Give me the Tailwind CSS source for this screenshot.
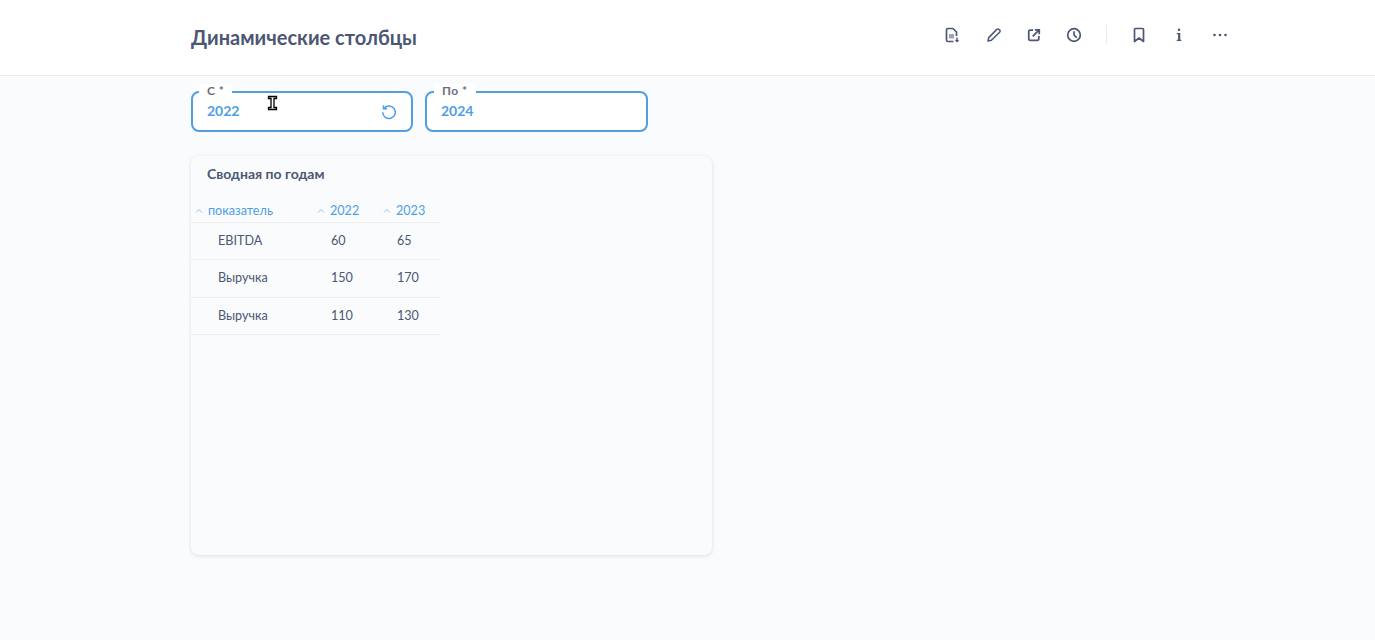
<!DOCTYPE html>
<html lang="ru">
  <head>
    <meta charset="UTF-8" />
    <title>Динамические столбцы</title>
    <script src="https://cdn.jsdelivr.net/npm/@tailwindcss/browser@4"></script>
  </head>
  <body class="relative h-[640px] overflow-hidden bg-[#f9fbfc] font-['Lato','Noto_Sans',sans-serif] text-[#4c5773]">
    <!-- Header -->
    <header class="flex h-[76px] items-center justify-between border-b border-[#eeecec] bg-white pl-[191px] pr-[147px]">
      <h1 class="pb-[2px] text-[20px] font-bold leading-none">Динамические столбцы</h1>
      <div class="flex items-center pb-[5px]">
        <svg class="size-4" viewBox="0 0 16 16" fill="none" stroke="currentColor" stroke-width="1.700">
          <path d="M9.500 14.500H4A1.500 1.500 0 0 1 2.500 13V3A1.500 1.500 0 0 1 4 1.500h5L12.500 5v4" stroke-linejoin="round" />
          <rect x="5" y="7" width="5" height="4.500" fill="currentColor" stroke="none" opacity=".55" />
          <path d="M13 10.500v4M11.500 13l1.500 1.500 1.500-1.500" stroke-width="1.300" />
        </svg>
        <svg class="ml-[26px] size-4" viewBox="0 0 16 16" fill="none" stroke="currentColor" stroke-width="1.500" stroke-linejoin="round">
          <path d="M2 14l.7-3.400L10.800 2.400a1.600 1.600 0 0 1 2.300 0l.5.5a1.600 1.600 0 0 1 0 2.300L5.400 13.300 2 14z" />
        </svg>
        <svg class="ml-[25px] size-[14px]" viewBox="0 0 16 16" fill="none" stroke="currentColor" stroke-width="2">
          <path d="M7 2.500H3.500A1.500 1.500 0 0 0 2 4v8.500A1.500 1.500 0 0 0 3.500 14H12a1.500 1.500 0 0 0 1.500-1.500V9" />
          <path d="M6.500 9.500L13 3M9 2h5v5" />
        </svg>
        <svg class="ml-[25px] size-4" viewBox="0 0 16 16" fill="none" stroke="currentColor" stroke-width="1.700">
          <circle cx="8" cy="8" r="6.300" />
          <path d="M8 4.200V8l2.800 2.600" />
        </svg>
        <div class="ml-[24px] h-5 w-px bg-[#eeecec]"></div>
        <svg class="ml-[24px] size-4" viewBox="0 0 16 16" fill="none" stroke="currentColor" stroke-width="1.700" stroke-linejoin="round">
          <path d="M3.500 2.500a1 1 0 0 1 1-1h7a1 1 0 0 1 1 1v12L8 11l-4.500 3.500z" />
        </svg>
        <svg class="ml-[24px] size-4" viewBox="0 0 16 16" fill="currentColor">
          <rect x="6.800" y="1.500" width="2.400" height="2.400" rx="1" />
          <path d="M5.800 6h3.500v6.700h1V14H5.700v-1.300h1.400V7.300H5.800z" />
        </svg>
        <svg class="ml-[25px] size-4" viewBox="0 0 16 16" fill="currentColor">
          <circle cx="2.500" cy="8" r="1.300" />
          <circle cx="8" cy="8" r="1.300" />
          <circle cx="13.500" cy="8" r="1.300" />
        </svg>
      </div>
    </header>

    <main class="pl-[191px]">
      <!-- Parameters -->
      <div class="flex gap-3 pt-[15px]">
        <div class="relative flex h-[41px] w-[222px] items-center justify-between rounded-lg border-2 border-[#509ee3] bg-white pb-[2px] pl-[14px] pr-[14px]">
          <span class="absolute -top-[9px] left-[6px] bg-white px-2 text-[12px] font-bold leading-[14px] tracking-[0.5px] text-[#696e7b]">С *</span>
          <span class="text-sm font-bold text-[#509ee3]">2022</span>
          <svg class="mt-[2px] size-4" viewBox="0 0 16 16" fill="none" stroke="#509ee3" stroke-width="1.500">
            <path d="M3.200 4.200A6.300 6.300 0 1 1 1.700 8.300" />
            <path d="M2.500 1.200v3.500H6" />
          </svg>
        </div>
        <div class="relative flex h-[41px] w-[223px] items-center rounded-lg border-2 border-[#509ee3] bg-white pb-[2px] pl-[14px]">
          <span class="absolute -top-[9px] left-[7px] bg-white px-2 text-[12px] font-bold leading-[14px] tracking-[0.5px] text-[#696e7b]">По *</span>
          <span class="text-sm font-bold text-[#509ee3]">2024</span>
        </div>
      </div>

      <!-- Card -->
      <section class="mt-6 h-[399px] w-[521px] rounded-lg bg-[#f9fbfc] shadow-[0_1px_4px_rgba(0,0,0,0.12)]">
        <h2 class="pl-4 pt-[10px] text-sm font-bold leading-4">Сводная по годам</h2>
        <table class="mt-[17px] w-[249px] table-fixed border-collapse text-[12.6px]">
          <thead>
            <tr class="h-[23px] border-b border-[#f0f0f0] text-[#509ee3]">
              <th class="w-[121px] p-0 pt-[2px] text-left font-normal">
                <div class="flex items-center pl-[4px]">
                  <svg class="mr-[5px] h-[8px] w-[8px]" viewBox="0 0 8 8" fill="none" stroke="#509ee3" stroke-opacity=".6"><path d="M1 5.500l3-3 3 3" /></svg>показатель
                </div>
              </th>
              <th class="w-[66px] p-0 pt-[2px] text-left font-normal">
                <div class="flex items-center pl-[5px]">
                  <svg class="mr-[5px] h-[8px] w-[8px]" viewBox="0 0 8 8" fill="none" stroke="#509ee3" stroke-opacity=".6"><path d="M1 5.500l3-3 3 3" /></svg>2022
                </div>
              </th>
              <th class="p-0 pt-[2px] text-left font-normal">
                <div class="flex items-center pl-[5px]">
                  <svg class="mr-[5px] h-[8px] w-[8px]" viewBox="0 0 8 8" fill="none" stroke="#509ee3" stroke-opacity=".6"><path d="M1 5.500l3-3 3 3" /></svg>2023
                </div>
              </th>
            </tr>
          </thead>
          <tbody>
            <tr class="h-[37px] border-b border-[#f0f0f0]">
              <td class="p-0 pl-[27px] pt-[2px]">EBITDA</td>
              <td class="p-0 pl-[19px] pt-[2px]">60</td>
              <td class="p-0 pl-[19px] pt-[2px]">65</td>
            </tr>
            <tr class="h-[38px] border-b border-[#f0f0f0]">
              <td class="p-0 pl-[27px]">Выручка</td>
              <td class="p-0 pl-[19px]">150</td>
              <td class="p-0 pl-[19px]">170</td>
            </tr>
            <tr class="h-[37px] border-b border-[#f0f0f0]">
              <td class="p-0 pl-[27px] pt-[2px]">Выручка</td>
              <td class="p-0 pl-[19px] pt-[2px]">110</td>
              <td class="p-0 pl-[19px] pt-[2px]">130</td>
            </tr>
          </tbody>
        </table>
      </section>
    </main>

    <!-- Mouse cursor -->
    <svg class="absolute left-[267px] top-[95px] h-[16px] w-[11px]" viewBox="0 0 11 16">
      <path d="M1.500 1.500h8v2H7v9h2.500v2h-8v-2H4v-9H1.500z" fill="#fff" stroke="#000" stroke-width="1.300" />
    </svg>
  </body>
</html>
